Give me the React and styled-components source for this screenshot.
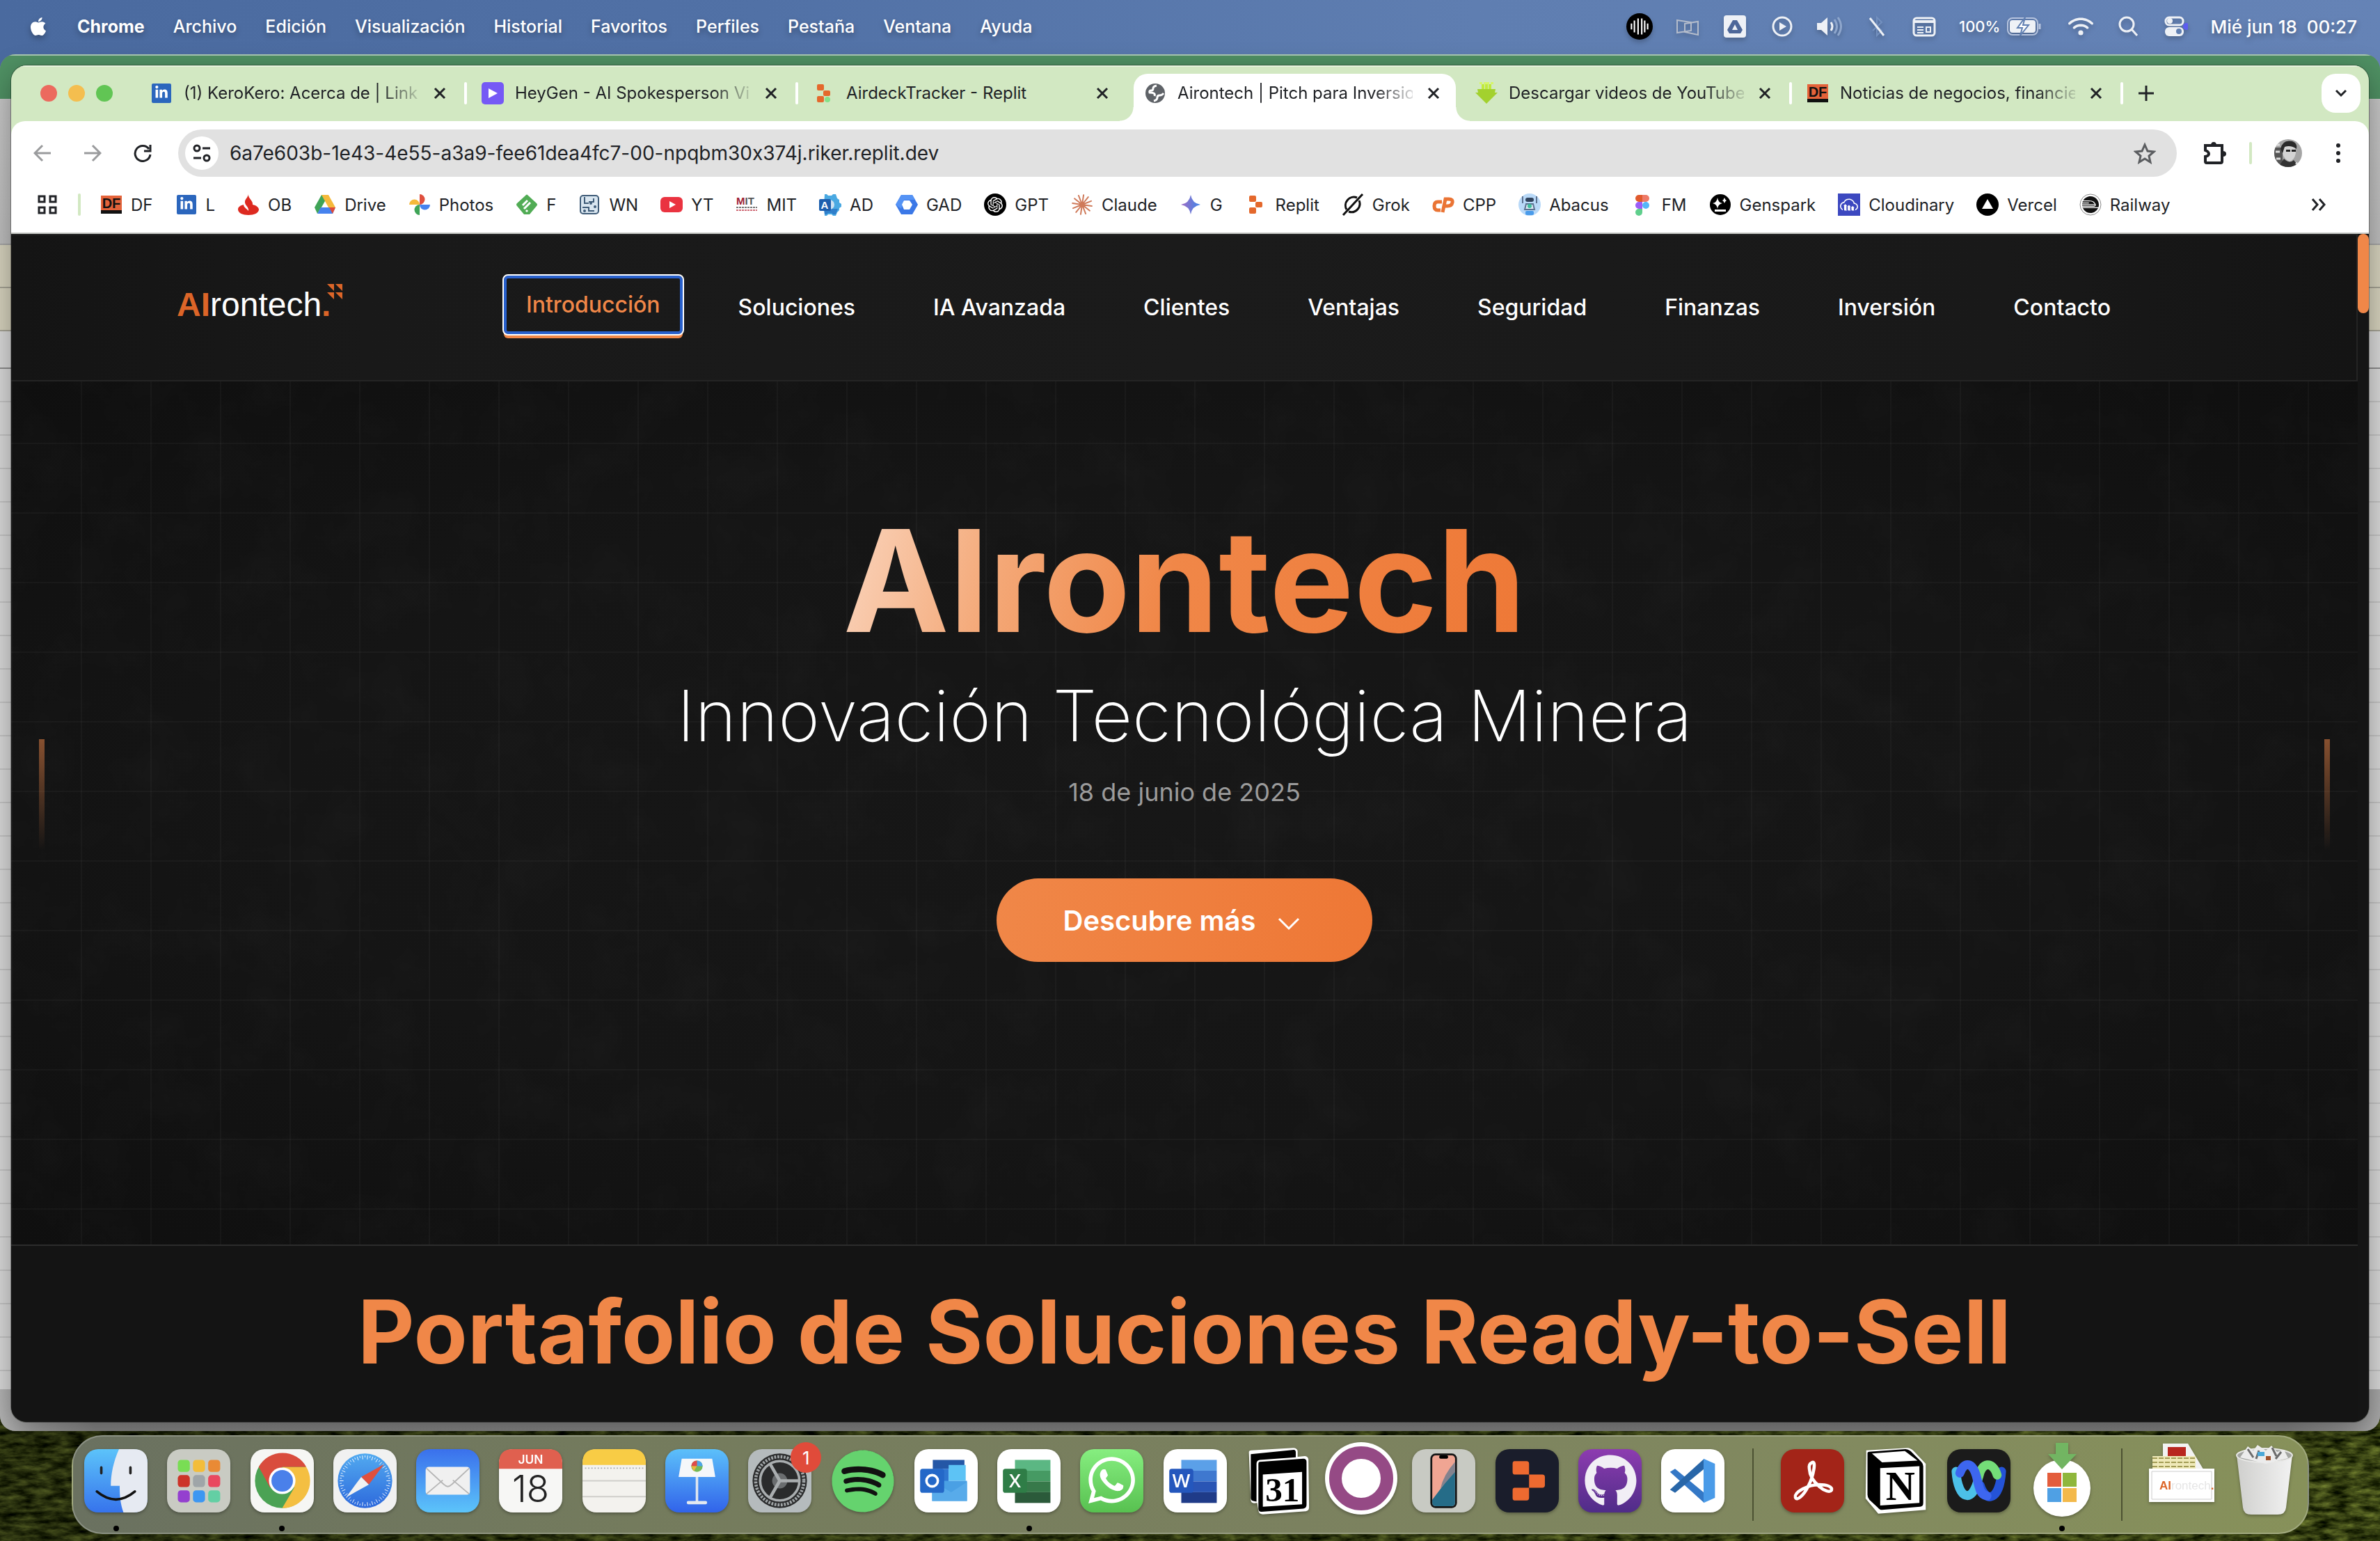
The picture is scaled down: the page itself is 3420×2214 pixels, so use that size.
import React from "react";
import styled, { createGlobalStyle, css } from "styled-components";
import { FaApple, FaSpotify, FaWhatsapp, FaGithub, FaLinkedinIn, FaWifi } from "react-icons/fa6";
import { SiOpenai, SiRailway, SiCloudinary } from "react-icons/si";

const sans = `Inter, "Liberation Sans", sans-serif`;

const GlobalStyle = createGlobalStyle`
  *, *::before, *::after { box-sizing: border-box; }
  html, body, #root { height: 100%; }
  body { margin: 0; overflow: hidden; font-family: ${sans}; background: #2b3413; }
  button, input { font: inherit; color: inherit; background: none; border: 0; padding: 0; margin: 0; }
  a { color: inherit; text-decoration: none; }
  ul, h1, h2, p { margin: 0; padding: 0; list-style: none; }
  svg { display: block; flex: none; }
`;

/* ---------- desktop ---------- */

const Desktop = styled.div`
  position: relative;
  height: 100vh;
  overflow: hidden;
  background: linear-gradient(90deg, #4a6a9f 0%, #5171a6 32%, #5f7eb1 62%, #6583b6 100%);
`;

const Wallpaper = styled.svg`
  position: absolute;
  left: 0;
  bottom: 0;
  width: 100%;
  height: 200px;
`;

const MenuBar = styled.header`
  display: flex;
  align-items: center;
  justify-content: space-between;
  height: 76px;
  padding: 0 33px 0 40px;
  color: #fff;
  font-size: 25px;
  font-weight: 500;
  text-shadow: 0 4px 8px rgba(0, 0, 0, 0.3);
  position: relative;
`;

const MenuList = styled.nav`
  display: flex;
  align-items: center;
  gap: 41px;
  & > svg { filter: drop-shadow(0 4px 4px rgba(0, 0, 0, 0.3)); }
`;

const MenuItem = styled.button`
  font-weight: ${(p) => (p.$bold ? 700 : 500)};
  text-shadow: inherit;
`;

const StatusList = styled.div`
  display: flex;
  align-items: center;
  gap: 32px;
  & > svg, & > div > svg { filter: drop-shadow(0 4px 3px rgba(0, 0, 0, 0.2)); }
`;

const Battery = styled.div`
  display: flex;
  align-items: center;
  gap: 10px;
  margin-right: 6px;
  font-size: 22px;
`;

const Clock = styled.time`
  white-space: pre;
  font-size: 26px;
`;

/* ---------- spreadsheet window behind ---------- */

const BackWindow = styled.section`
  position: absolute;
  inset: 78px 0 158px 0;
  display: flex;
  flex-direction: column;
  overflow: hidden;
  border-radius: 22px;
  background: #8b8b8b;
`;

const SheetTitle = styled.div`
  height: 64px;
  flex: none;
  border-top: 2px solid #a9c8b2;
  background: #4f9063;
`;

const SheetBand = styled.div`
  flex: none;
  height: ${(p) => p.$h}px;
  background: ${(p) => p.$bg};
  border-bottom: 2px solid ${(p) => p.$line};
`;

const SheetCells = styled.div`
  flex: 1;
  background: repeating-linear-gradient(#d9d9d9 0 46px, #c4c4c4 46px 48px);
`;

const SheetStatus = styled.div`
  flex: none;
  height: 60px;
  background: linear-gradient(90deg, #b4b4b4 0, #8b8b8b 4%, #878787 96%, #a8a8a8 100%);
`;

/* ---------- browser window ---------- */

const BrowserWindow = styled.section`
  position: absolute;
  inset: 94px 16px 171px 16px;
  display: flex;
  flex-direction: column;
  overflow: hidden;
  border-radius: 22px;
  background: #d2e8c2;
  color: #202226;
  box-shadow: 0 0 0 1px rgba(0, 0, 0, 0.3), 0 12px 40px rgba(0, 0, 0, 0.35);
`;

const TabStrip = styled.div`
  display: flex;
  align-items: center;
  flex: none;
  height: 80px;
  padding-right: 12px;
  box-shadow: inset 0 2px 0 #e6f3dc;
`;

const Lights = styled.div`
  display: flex;
  gap: 16px;
  width: 177px;
  padding-left: 42px;
`;

const Light = styled.button`
  width: 24px;
  height: 24px;
  border-radius: 50%;
  background: ${(p) => p.$color};
`;

const Tab = styled.div`
  position: relative;
  display: flex;
  align-items: center;
  width: 476px;
  height: 80px;
  padding: 0 23px;
  gap: 16px;
  font-size: 24px;
  z-index: 0;
  & > svg { width: 32px; height: 32px; }
  ${(p) =>
    p.$divider &&
    css`
      &::after {
        content: "";
        position: absolute;
        right: -2px;
        top: 24px;
        width: 4px;
        height: 32px;
        border-radius: 2px;
        background: #fff;
      }
    `}
  ${(p) =>
    p.$active &&
    css`
      &::before {
        content: "";
        position: absolute;
        z-index: -1;
        inset: 12px 5px 0 8px;
        border-radius: 20px 20px 0 0;
        background: #fff;
      }
      &::after {
        content: "";
        position: absolute;
        inset: auto -15px 0 -12px;
        height: 20px;
        background: radial-gradient(circle at 0 0, transparent 19px, #fff 20px) left / 20px 20px no-repeat,
          radial-gradient(circle at 100% 0, transparent 19px, #fff 20px) right / 20px 20px no-repeat;
      }
    `}
`;

const TabTitle = styled.button`
  flex: 1;
  min-width: 0;
  white-space: nowrap;
  text-align: left;
  line-height: 32px;
  ${(p) => p.$fade && css`mask-image: linear-gradient(90deg, #000 calc(100% - 56px), rgba(0, 0, 0, 0.15));`}
`;

const IconButton = styled.button`
  display: grid;
  place-items: center;
  flex: none;
  width: ${(p) => p.$w || 72}px;
  height: ${(p) => p.$h || 56}px;
  border-radius: 20px;
  background: ${(p) => p.$bg || "transparent"};
  color: ${(p) => p.$color || "#202226"};
`;

const Spacer = styled.div`
  flex: 1;
`;

const Toolbar = styled.div`
  flex: none;
  border-radius: 20px 20px 0 0;
  background: #fff;
  border-bottom: 2px solid #c9cbc8;
`;

const AddressRow = styled.div`
  display: flex;
  align-items: center;
  height: 92px;
  padding: 0 8px 0 9px;
`;

const Omnibox = styled.label`
  display: flex;
  align-items: center;
  flex: 1;
  height: 68px;
  margin: 0 18px 0 15px;
  padding: 0 10px;
  border-radius: 34px;
  background: #e1e1e1;
`;

const AddressInput = styled.input`
  flex: 1;
  padding: 0 16px;
  font-size: 28px;
  font-feature-settings: "calt" 0;
  outline: none;
`;

const SiteInfo = styled.span`
  display: grid;
  place-items: center;
  width: 48px;
  height: 48px;
  border-radius: 50%;
  background: #fff;
`;

const Rule = styled.span`
  flex: none;
  width: 4px;
  height: 32px;
  margin: 0 ${(p) => p.$after || 0}px 0 ${(p) => p.$before}px;
  border-radius: 2px;
  background: #d2e8c2;
`;

const Avatar = styled.svg`
  width: 40px;
  height: 40px;
  border-radius: 50%;
`;

const Bookmarks = styled.nav`
  display: flex;
  align-items: center;
  height: 56px;
  margin-bottom: 12px;
  padding: 0 36px;
`;

const BookmarkList = styled.ul`
  display: flex;
  gap: 32px;
  margin-left: 28px;
`;

const Bookmark = styled.a`
  display: flex;
  align-items: center;
  gap: 12px;
  font-size: 24px;
  white-space: nowrap;
  & > svg { width: 32px; height: 32px; }
`;

/* ---------- web page ---------- */

const Viewport = styled.div`
  position: relative;
  display: flex;
  flex: 1;
  min-height: 0;
  background: #131313;
`;

const Page = styled.main`
  position: relative;
  display: flex;
  flex-direction: column;
  flex: 1;
`;

const Scrollbar = styled.div`
  width: 16px;
  flex: none;
  background: #151515;
`;

const Thumb = styled.div`
  height: 114px;
  border-radius: 8px;
  background: #f08748;
`;

const PageHeader = styled.header`
  display: flex;
  align-items: center;
  flex: none;
  height: 212px;
  padding: 0 238px;
  border: 2px solid #242424;
  border-left: 0;
  background: linear-gradient(90deg, #141414 0, #191919 15%, #1b1b1b 50%, #191919 85%, #141414 100%);
`;

const Logo = styled.a`
  position: relative;
  width: 238px;
  margin: 0 232px 8px 0;
  font-family: "Liberation Sans", sans-serif;
  font-size: 48px;
  line-height: 56px;
  color: #fff;
  & > svg { position: absolute; right: 0; top: -2px; }
`;

const LogoAccent = styled.b`
  color: #dc6528;
`;

const SiteNav = styled.nav`
  display: flex;
  align-items: center;
  gap: 48px;
`;

const NavLink = styled.a`
  padding: 24px 32px;
  font-size: 32px;
  font-weight: 500;
  line-height: 36px;
  color: #fff;
  white-space: nowrap;
  ${(p) =>
    p.$active &&
    css`
      margin-bottom: 8px;
      color: #f08748;
      border-radius: 6px;
      outline: 2px solid #fff;
      box-shadow: inset 0 0 0 4px #2860cc, 0 6px 0 0 #f08748;
    `}
`;

const Hero = styled.section`
  position: relative;
  display: flex;
  flex-direction: column;
  align-items: center;
  flex: 1;
  padding-top: 166px;
  background:
    repeating-linear-gradient(90deg, rgba(255, 255, 255, 0.03) 0 2px, transparent 2px 100px),
    repeating-linear-gradient(180deg, transparent 0 88px, rgba(255, 255, 255, 0.03) 88px 90px, transparent 90px 100px),
    radial-gradient(ellipse at 50% 50%, #171717 0, #151515 55%, #0f0f0f 100%);
`;

const Grain = styled.svg`
  position: absolute;
  inset: 0;
  width: 100%;
  height: 100%;
  opacity: 0.08;
`;

const SideBar = styled.i`
  position: absolute;
  top: 514px;
  ${(p) => p.$side}: 40px;
  width: 8px;
  height: 160px;
  background: linear-gradient(rgba(240, 135, 72, 0.52), rgba(240, 135, 72, 0));
`;

const HeroTitle = styled.h1`
  position: relative;
  font-size: 204px;
  line-height: 240px;
  font-weight: 700;
  color: transparent;
  background: linear-gradient(105deg, #fad6bf 0%, #f4a877 24%, #f08748 48%, #ee7836 100%);
  background-clip: text;
`;

const HeroSubtitle = styled.p`
  position: relative;
  margin-top: 16px;
  font-size: 102px;
  line-height: 116px;
  font-weight: 200;
  color: #fff;
`;

const HeroDate = styled.p`
  position: relative;
  margin-top: 30px;
  font-size: 36px;
  line-height: 44px;
  color: #9b9b9b;
`;

const Cta = styled.button`
  position: relative;
  display: flex;
  align-items: center;
  gap: 30px;
  height: 120px;
  margin-top: 102px;
  padding: 0 102px 0 96px;
  border-radius: 60px;
  font-size: 40px;
  font-weight: 600;
  color: #fff;
  background: linear-gradient(100deg, #f08748, #ee7735);
`;

const Portfolio = styled.section`
  flex: none;
  padding: 51px 0 58px;
  border-top: 2px solid #2c2c2c;
  background: #141414;
  text-align: center;
`;

const PortfolioTitle = styled.h2`
  font-size: 126px;
  line-height: 144px;
  font-weight: 700;
  color: #f08748;
`;

/* ---------- dock ---------- */

const Dock = styled.footer`
  position: absolute;
  left: 103px;
  right: 102px;
  bottom: 10px;
  display: flex;
  height: 142px;
  padding: 0 2px;
  border-radius: 44px;
  border: 2px solid rgba(255, 255, 255, 0.22);
  background: linear-gradient(90deg, #6a7160 0%, #747b5d 25%, #7b815f 55%, #828a5f 80%, #87915a 100%);
`;

const DockItem = styled.button`
  position: relative;
  display: flex;
  justify-content: center;
  flex: 1;
  padding-top: ${(p) => p.$top || 18}px;
  & > svg { overflow: visible; filter: drop-shadow(0 2px 2px rgba(0, 0, 0, 0.3)); }
  &::after {
    content: "";
    display: ${(p) => (p.$running ? "block" : "none")};
    position: absolute;
    bottom: 2px;
    left: calc(50% - 4px);
    width: 8px;
    height: 8px;
    border-radius: 50%;
    background: #000;
  }
`;

const DockRule = styled.span`
  flex: none;
  width: 53px;
  margin: 17px 0;
  background: linear-gradient(#4c5232, #4c5232) center / 2px 100% no-repeat;
`;

const Badge = styled.span`
  position: absolute;
  right: 0;
  top: 8px;
  display: grid;
  place-items: center;
  width: 44px;
  height: 44px;
  border-radius: 50%;
  background: #e04b3a;
  color: #fff;
  font-size: 26px;
`;

/* ---------- drawings ---------- */

const Svg = ({ s = 32, box = 32, children, ...rest }) => (
  <svg width={s} height={s} viewBox={`0 0 ${box} ${box}`} fill="none" {...rest}>
    {children}
  </svg>
);

const Grad = ({ id, a, b, h }) => (
  <linearGradient id={id} x1="0" y1="0" x2={h ? 1 : 0} y2={h ? 0 : 1}>
    <stop offset="0" stopColor={a} />
    <stop offset="1" stopColor={b} />
  </linearGradient>
);

const CloseIcon = () => (
  <Svg s={18} box={18} stroke="#202226" strokeWidth="3"><path d="M2 2l14 14M16 2L2 16" /></Svg>
);

const LinkedIn = () => (
  <Svg><rect x="2" y="2" width="28" height="28" rx="2" fill="#2b66bd" /><FaLinkedinIn x="6" y="5" size={20} color="#fff" /></Svg>
);
const DFIcon = () => (
  <Svg>
    <rect x="1" y="3" width="30" height="26" fill="#111" /><rect x="1" y="3" width="30" height="21" fill="#e4633a" />
    <text x="16" y="21" fontSize="20" fontWeight="600" textAnchor="middle" fill="#111" fontFamily="Liberation Sans, sans-serif">DF</text>
  </Svg>
);
const ReplitIcon = ({ dot }) => (
  <Svg fill="#e4682c">
    <rect x="6" y="3" width="10" height="9" rx="2" /><rect x="15" y="12" width="10" height="8" rx="2" />
    <rect x="6" y="20" width="10" height="9" rx="2" />{dot && <circle cx="21" cy="25" r="4" fill="#85e08a" />}
  </Svg>
);
const HeyGen = () => (
  <Svg><rect width="32" height="32" rx="5" fill="#7559f5" /><path d="M10 9l13 7-13 7z" fill="#fff" /></Svg>
);
const GlobeIcon = () => (
  <Svg><circle cx="16" cy="16" r="14" fill="#5f6368" /><path d="M18 5q-5 1-5 4 0 3-3 3t-2 3q4 0 6 1t1 4" stroke="#fff" strokeWidth="3" /><path d="M14 27q5-1 5-5 0-3 3-3 4 0 6-3" stroke="#fff" strokeWidth="3" /></Svg>
);
const DownIcon = () => (
  <Svg><path d="M6 0h4v3H6zM12 0h8v3h-8zM22 0h4v3h-4z" fill="#d6f56a" /><path d="M9 3h4v8H9zM14 3h4v8h-4zM19 3h4v8h-4z" fill="#c1ea3c" /><path d="M3 10h26l-1 5h4L16 31 0 15h4z" fill="#a3d12e" /></Svg>
);

const tabs = [
  { title: "(1) KeroKero: Acerca de | Link", icon: <LinkedIn />, divider: true, fade: true },
  { title: "HeyGen - AI Spokesperson Vi", icon: <HeyGen />, divider: true, fade: true },
  { title: "AirdeckTracker - Replit", icon: <ReplitIcon dot /> },
  { title: "Airontech | Pitch para Inversio", icon: <GlobeIcon />, active: true, fade: true },
  { title: "Descargar videos de YouTube", icon: <DownIcon />, divider: true, fade: true },
  { title: "Noticias de negocios, financie", icon: <DFIcon />, divider: true, fade: true },
];

const rays = Array.from({ length: 12 }, (_, i) => {
  const a = (i * Math.PI) / 6 + 0.15;
  return `M16 16L${16 + 14 * Math.cos(a)} ${16 + 14 * Math.sin(a)}`;
}).join("");

const bookmarks = [
  ["DF", <DFIcon />],
  ["L", <LinkedIn />],
  ["OB", <Svg><path d="M16 1c-1 6 7 9 6 15 5 1 9 4 9 7 0 5-7 8-15 8S1 28 1 23c0-4 4-6 8-7 0 4 5 6 7 9 1-6-6-8-5-14 1-4 4-5 5-10z" fill="#dd2a20" /></Svg>],
  ["Drive", <Svg><path d="M11 2h10l-9 16-7 11-4-9z" fill="#3fa457" /><path d="M11 2h10l10 18H21z" fill="#f5b93b" /><path d="M10 20h21l-4 9H5z" fill="#4682ee" /><path d="M22 20h9l-4 9z" fill="#e04a38" /></Svg>],
  ["Photos", <Svg><path d="M16 1a7.500 7.500 0 0 1 0 15z" fill="#df4f3e" /><path d="M31 16a7.500 7.500 0 0 1-15 0z" fill="#4682ee" /><path d="M16 31a7.500 7.500 0 0 1 0-15z" fill="#3fa457" /><path d="M1 16a7.500 7.500 0 0 1 15 0z" fill="#f5b93b" /></Svg>],
  ["F", <Svg><path d="M14 3q2-3 4 0l12 11q2 2 0 4L20 30h-8L2 18q-2-2 0-4z" fill="#51ac55" /><path d="M10 17l7-7M12 22l9-9M15 26l2-2" stroke="#fff" strokeWidth="3" /></Svg>],
  ["WN", <Svg><rect x="3" y="3" width="26" height="26" rx="4" fill="#d9e6f0" stroke="#3f5c78" strokeWidth="2" /><path d="M9 5v9h6M22 7v5h-7M6 20h9v5h8" stroke="#3f5c78" strokeWidth="2" /><circle cx="18" cy="14" r="2" fill="#3f5c78" /><circle cx="24" cy="19" r="2" fill="#3f5c78" /><circle cx="9" cy="25" r="2" fill="#3f5c78" /></Svg>],
  ["YT", <Svg><rect x="0" y="5" width="32" height="22" rx="6" fill="#ea3340" /><path d="M13 11l9 5-9 5z" fill="#fff" /></Svg>],
  ["MIT", <Svg fontFamily="Liberation Sans, sans-serif" fontWeight="700"><text x="1" y="16" fontSize="15" fill="#9d2235">M<tspan fill="#555">IT</tspan></text><path d="M1 20h30" stroke="#777" strokeWidth="2" strokeDasharray="3 1" /><path d="M1 24h30" stroke="#cf6b77" strokeWidth="2" strokeDasharray="3 1" /></Svg>],
  ["AD", <Svg><path d="M8 1h3l2 2h5l2-2h4l2 6 3 2v4l3 2v4l-3 2v3l-3 3-2 5h-4l-2-2h-5l-2 2H8L7 16z" fill="#4aa9e2" /><path d="M7 22h20l-3 8h-4l-2-2h-5l-2 2H8z" fill="#2f7fcb" /><path d="M15 9a7 7 0 0 1 0 14z" fill="#cfe2f2" /><rect x="0" y="8" width="17" height="17" rx="2" fill="#1d5fae" /><text x="8" y="22" fontSize="15" fontWeight="700" textAnchor="middle" fill="#fff" fontFamily="Liberation Sans, sans-serif">A</text></Svg>],
  ["GAD", <Svg><path d="M8 2h16l8 14-8 14H8L0 16z" fill="#3b78e7" /><path d="M8 2h16l4 7H12L8 22 0 16z" fill="#5593f5" /><path d="M12 10h8l4 6-4 7h-8l-3-7z" fill="#fff" /></Svg>],
  ["GPT", <Svg><circle cx="16" cy="16" r="16" fill="#000" /><SiOpenai x="5" y="5" size={22} color="#fff" /></Svg>],
  ["Claude", <Svg><path d={rays} stroke="#cf7a5a" strokeWidth="2" strokeLinecap="round" /></Svg>],
  ["G", <Svg><defs><Grad id="gem" a="#a06cc4" b="#3f86e8" h /></defs><path d="M16 2q2 12 14 14-12 2-14 14Q14 18 2 16 14 14 16 2z" fill="url(#gem)" /></Svg>],
  ["Replit", <ReplitIcon />],
  ["Grok", <Svg stroke="#111" strokeWidth="3"><path d="M22 6a12 12 0 0 0-15 17M10 26a12 12 0 0 0 15-16M2 31L30 1" /></Svg>],
  ["CPP", <Svg stroke="#ea7434" strokeWidth="5"><path d="M14 12H8q-5 0-5 6t5 6h4M15 27l4-19h5q6 0 5 5t-7 5h-4" /></Svg>],
  ["Abacus", <Svg><circle cx="16" cy="16" r="16" fill="#b9d9f8" /><rect x="10" y="6" width="12" height="6" rx="3" fill="#31435c" /><path d="M6 4v10M26 4v10M11 15h10l2 8H9z" stroke="#5b7190" strokeWidth="2" fill="#dce9f5" /><circle cx="16" cy="18" r="3" fill="#3bbf9a" /><rect x="10" y="25" width="12" height="6" rx="2" fill="#4a9bea" /></Svg>],
  ["FM", <Svg><path d="M16 2H11a5 5 0 0 0 0 10h5z" fill="#e05a2d" /><path d="M16 2h5a5 5 0 0 1 0 10h-5z" fill="#ee7a68" /><path d="M16 12h-5a5 5 0 0 0 0 10h5z" fill="#9b5cf6" /><circle cx="21" cy="17" r="5" fill="#55b7f8" /><path d="M16 22h-5a5 5 0 1 0 5 5z" fill="#5fcf8c" /></Svg>],
  ["Genspark", <Svg><circle cx="16" cy="16" r="15" fill="#000" /><path d="M12 6q1 7 7 8-6 1-7 8-1-7-7-8 6-1 7-8zM22 6q1 3 3 4-2 1-3 4-1-3-3-4 2-1 3-4zM8 23h16v3H8z" fill="#fff" /></Svg>],
  ["Cloudinary", <Svg><rect width="32" height="32" fill="#3c48c0" /><SiCloudinary x="3" y="3" size={26} color="#fff" /></Svg>],
  ["Vercel", <Svg><circle cx="16" cy="16" r="16" fill="#000" /><path d="M16 8l8 14H8z" fill="#fff" /></Svg>],
  ["Railway", <Svg><circle cx="16" cy="16" r="15" fill="#fff" stroke="#888" /><SiRailway x="4" y="4" size={24} color="#111" /></Svg>],
];

const menus = ["Archivo", "Edición", "Visualización", "Historial", "Favoritos", "Perfiles", "Pestaña", "Ventana", "Ayuda"];
const links = ["Introducción", "Soluciones", "IA Avanzada", "Clientes", "Ventajas", "Seguridad", "Finanzas", "Inversión", "Contacto"];

const Tile = ({ fill, children }) => (
  <Svg s={91} box={100}><rect width="100" height="100" rx="22" fill={fill} />{children}</Svg>
);

const OfficeTile = ({ letter, colors, dark }) => (
  <Tile fill="#fff">
    {colors.map((c, i) => <rect key={c} x="28" y={17 + i * 17} width="56" height="17" fill={c} />)}
    <rect x="9" y="31" width="38" height="38" rx="4" fill={dark} />
    <text x="28" y="60" fontSize="30" fontWeight="600" textAnchor="middle" fill="#fff" fontFamily="Open Sans, sans-serif">{letter}</text>
  </Tile>
);

const padColors = ["#79dd54", "#f3bd3a", "#e98a35", "#cc3328", "#9fa5a8", "#e9485f", "#9440cf", "#3d97f2", "#63cfa4"];
const ticks = Array.from({ length: 60 }, (_, i) => {
  const a = (i * Math.PI) / 30;
  const c = Math.cos(a), s = Math.sin(a), r = i % 2 ? 37 : 34;
  return `M${50 + r * c} ${50 + r * s}L${50 + 40 * c} ${50 + 40 * s}`;
}).join("");

const dockMain = [
  ["Finder", <Tile fill="url(#finder)"><path d="M55 0c-9 20-13 40-13 58h14c0 16 1 28 6 42h16q22 0 22-22V22Q100 0 78 0z" fill="#e6eaf2" /><path d="M27 29v9M73 29v9" stroke="#222" strokeWidth="4" strokeLinecap="round" /><path d="M20 67q30 25 60 0" stroke="#111" strokeWidth="4" strokeLinecap="round" /></Tile>, { $running: true }],
  ["Launchpad", <Tile fill="#c9cbc3">{padColors.map((c, i) => <rect key={c} x={17 + (i % 3) * 24} y={17 + Math.floor(i / 3) * 24} width="19" height="19" rx="5" fill={c} />)}</Tile>],
  ["Chrome", <Tile fill="#f6f6f4"><circle cx="50" cy="50" r="43" fill="#4ba254" /><path d="M50 28h38A43 43 0 0 1 50 93l19-32z" fill="#f4bf42" /><path d="M13 28A43 43 0 0 1 88 28H50L31 61z" fill="#d94c3d" /><circle cx="50" cy="50" r="21" fill="#fff" /><circle cx="50" cy="50" r="17" fill="#4a80ea" /></Tile>, { $running: true }],
  ["Safari", <Tile fill="#f1f1f1"><circle cx="50" cy="50" r="43" fill="url(#safari)" /><path d={ticks} stroke="#fff" strokeWidth="1" /><path d="M80 24L56 56 44 44z" fill="#e0503e" /><path d="M20 76l24-32 12 12z" fill="#f2f2f2" /></Tile>],
  ["Mail", <Tile fill="url(#mail)"><rect x="15" y="28" width="70" height="44" rx="5" fill="#f0f0f0" /><path d="M16 71l26-22M84 71L58 49M16 30l28 26q6 6 12 0l28-26" stroke="#b5b5b5" strokeWidth="2" /></Tile>],
  ["Calendario", <Tile fill="#f7f7f5"><path d="M0 31V22Q0 0 22 0h56q22 0 22 22v9z" fill="#e0604f" /><text x="50" y="23" fontSize="19" fontWeight="600" textAnchor="middle" fill="#fff" fontFamily="Inter, sans-serif">JUN</text><text x="50" y="84" fontSize="58" textAnchor="middle" fill="#222" fontWeight="300" fontFamily="Inter, sans-serif">18</text></Tile>],
  ["Notas", <Tile fill="#f3f2ee"><path d="M0 25V22Q0 0 22 0h56q22 0 22 22v3z" fill="#f8cc45" /><path d="M0 50h100M0 75h100" stroke="#d0cfcb" strokeWidth="2" /><path d="M4 30h92" stroke="#aaa" strokeWidth="2" strokeDasharray="2 3" /></Tile>],
  ["Keynote", <Tile fill="url(#keynote)"><path d="M26 15h48l5 29H21z" fill="#f5f7fa" /><circle cx="50" cy="27" r="9" fill="#75b956" /><path d="M50 27v-9a9 9 0 0 1 9 9z" fill="#4ea5ea" /><path d="M50 27v-9a9 9 0 0 0-9 9z" fill="#df4a4a" /><path d="M41 27h9l-5 8z" fill="#edb43c" /><path d="M50 44v42" stroke="#dfe6f0" strokeWidth="4" /><rect x="34" y="82" width="32" height="5" rx="2" fill="#e4e9f0" /></Tile>],
  ["Ajustes", <Tile fill="#b5bbbd"><circle cx="50" cy="50" r="43" fill="#2a2b2c" /><circle cx="50" cy="50" r="38" stroke="#9fa4a6" strokeWidth="5" strokeDasharray="3 2" /><circle cx="50" cy="50" r="31" stroke="#a9adaf" strokeWidth="4" /><circle cx="50" cy="50" r="12" fill="#6a6d6f" /><path d="M50 50h32M50 50L34 22M50 50L34 78" stroke="#a9adaf" strokeWidth="5" /></Tile>, { badge: "1" }],
  ["Spotify", <Svg s={92} box={100}><circle cx="50" cy="50" r="48" fill="#111" /><FaSpotify size={100} color="#65d36e" /></Svg>],
  ["Outlook", <Tile fill="#fff"><path d="M29 17h50v14H29z" fill="#2457a6" /><path d="M29 31h25v35H29z" fill="#2f76d0" /><path d="M54 25h27v25H54z" fill="#5dc3f5" /><path d="M28 50h55v32H28z" fill="#4aa0e4" /><path d="M28 50l30 18 25-16v30H28z" fill="#58abea" /><rect x="9" y="31" width="38" height="38" rx="4" fill="#2468c8" /><circle cx="28" cy="50" r="9" stroke="#fff" strokeWidth="4" /></Tile>],
  ["Excel", <OfficeTile letter="X" dark="#2f7d47" colors={["#5bb783", "#469a63", "#37794a", "#2b5a3a"]} />, { $running: true }],
  ["WhatsApp", <Tile fill="url(#wa)"><FaWhatsapp x="8" y="7" size={84} color="#fff" /></Tile>],
  ["Word", <OfficeTile letter="W" dark="#2457bd" colors={["#5ba0e8", "#3f78cf", "#2a55b5", "#1f3b88"]} />],
  ["Notion Calendar", <Svg s={91} box={100}><path d="M4 5q0-3 4-3L74-2q6 0 7 5v9l11-1q5 0 6 5l1 76q0 5-5 6l-68 5q-6 0-7-6l-2-12q-9 2-10-4z" fill="#fff" /><path d="M7 8l68-7q3 0 3 4v8L21 17q-5 1-5 6v60l-5-1q-4-1-4-5z" fill="#000" /><path d="M21 20l69-5q5 0 5 5v68q0 5-5 6l-66 5q-5 0-5-5V24q0-4 2-4z" fill="#000" /><path d="M26 40l62-4v51l-62 4z" fill="#fff" /><text x="57" y="82" fontSize="54" fontWeight="700" textAnchor="middle" fill="#000" fontFamily="Liberation Serif, serif">31</text></Svg>],
  ["Grabadora", <Svg s={104} box={104}><circle cx="52" cy="52" r="52" fill="#fff" /><circle cx="52" cy="52" r="37" stroke="#954a85" strokeWidth="18" /></Svg>, { $top: 8 }],
  ["Duplicación del iPhone", <Tile fill="#c8cac3"><rect x="29" y="7" width="42" height="86" rx="8" fill="#151515" /><rect x="32" y="10" width="36" height="80" rx="5" fill="#f0a593" /><path d="M68 32Q40 70 32 80v5q0 5 5 5h26q5 0 5-5z" fill="#256c88" /><path d="M68 20Q50 40 45 62l23-26z" fill="#83828e" /><rect x="43" y="10" width="14" height="5" rx="2" fill="#000" /></Tile>],
  ["Replit", <Tile fill="#1a1d2b"><path d="M30 19h19q4 0 4 4v17H30q-3 0-3-4V23q0-4 3-4zM53 40h21q4 0 4 4v13q0 4-4 4H53zM30 61h23v16q0 4-4 4H30q-3 0-3-4V65q0-4 3-4z" fill="#ee6a30" /></Tile>],
  ["GitHub", <Tile fill="url(#gh)"><FaGithub x="9" y="8" size={84} color="#f1eef5" /></Tile>],
  ["Visual Studio Code", <Tile fill="#fff"><path d="M14 36l8-5 46 38v16z" fill="#3478c6" /><path d="M14 64l8 5 46-38V15z" fill="#2866a8" /><path d="M67 15l18 8v54l-18 8z" fill="#4a9be8" /></Tile>],
];

const dockRecent = [
  ["Acrobat", <Tile fill="#a32418"><path d="M48 22c9-8 4 20-5 37-7 14-18 24-20 17-2-8 20-20 37-20 12 0 22 3 20 9-5 8-34-12-35-34q-1-7 3-9z" stroke="#fff" strokeWidth="5" /></Tile>],
  ["Notion", <Svg s={91} box={100}><path d="M3 2L68-2q5 0 10 5l19 20v73L22 102 2 78z" fill="#fff" /><path d="M5 6q0-2 3-2l57-4q4 0 8 3l17 17q3 3 3 7v58q0 6-5 6l-60 5q-4 0-7-4L8 80q-3-4-3-8z" fill="#000" /><path d="M12 7l52-4 20 15-56 3z" fill="#fff" /><path d="M25 30l62-3v58l-62 4z" fill="#fff" /><text x="57" y="80" fontSize="64" fontWeight="700" textAnchor="middle" fill="#000" fontFamily="Liberation Serif, serif">N</text></Svg>],
  ["Webex", <Tile fill="#1b1b1b"><path d="M86 35c-3 45-24 52-34 22" stroke="#2453d8" strokeWidth="14" strokeLinecap="round" /><path d="M14 35c3 45 26 52 35 12" stroke="#4cc0e8" strokeWidth="14" strokeLinecap="round" /><path d="M50 44c4-24 22-26 29-3" stroke="#74dd78" strokeWidth="14" strokeLinecap="round" /><path d="M20 38c7-20 21-18 27 8 4 18 6 26 16 28" stroke="#3d66f0" strokeWidth="14" strokeLinecap="round" /></Tile>],
  ["Microsoft AutoUpdate", <Svg s={106} box={106}><circle cx="53" cy="65" r="41" fill="#fff" /><path d="M44 0h18v16h12L53 38 33 16h11z" fill="#72b562" /><path d="M32 43h20v20H32z" fill="#e35d3c" /><path d="M54 43h20v20H54z" fill="#8fb73c" /><path d="M32 65h20v20H32z" fill="#4fa0e4" /><path d="M54 65h20v20H54z" fill="#f3b94b" /></Svg>, { $running: true, $top: 9 }],
];

const dockRight = [
  ["Descargas", <Svg s={94} box={94}><path d="M20 0h36l24 40H20z" fill="#f2f2f2" /><path d="M27 5h26v14H27z" fill="#b8261f" /><path d="M5 18h62v20H5z" fill="#efe9b8" /><path d="M5 21h62M5 27h62M5 33h62" stroke="#a29c55" strokeWidth="2" strokeDasharray="7 2" /><path d="M0 36h94v48H0z" fill="#fff" /><path d="M4 40h86v40H4z" stroke="#ccc" /><text x="15" y="66" fontSize="17" fontFamily="Liberation Sans, sans-serif" fill="#dc6528" fontWeight="700">AI<tspan fill="#e6e6e6" fontWeight="400">rontech</tspan>.</text></Svg>, { $top: 10 }],
  ["Papelera", <Svg s={104} box={104}><defs><Grad id="bin" a="#cfcfcd" b="#f2f2f2" h /></defs><path d="M12 16h80l-9 76q-1 10-12 10H33q-11 0-12-10z" fill="url(#bin)" /><ellipse cx="52" cy="17" rx="40" ry="10" fill="#a4a6a2" stroke="#e8e8e6" strokeWidth="2" /><path d="M17 20L28 4l8 6 6-8 12 8 8-7 8 9 10-3 6 12-32 8z" fill="#ececec" /><path d="M28 8l8 12M44 10l-4 12M63 6l6 12M76 12l-8 10" stroke="#6c6c6c" strokeWidth="3" /><path d="M42 12h10v6H42z" fill="#4aa8d8" /><path d="M54 18h7v6h-7z" fill="#a0522d" /></Svg>, { $top: 10 }],
];

const DockGroup = ({ items }) =>
  items.map(([label, icon, opts = {}]) => {
    const { badge, ...rest } = opts;
    return (
      <DockItem key={label} aria-label={label} {...rest}>
        {icon}
        {badge && <Badge>{badge}</Badge>}
      </DockItem>
    );
  });

const StatusIcons = () => (
  <>
    <Svg s={38} box={36}><circle cx="18" cy="18" r="18" fill="#000" /><path d="M7 14v8M11 10v16M16 7v22M21 7v22M25 10v16M29 14v8" stroke="#fff" strokeWidth="2" /></Svg>
    <Svg s={36} box={36} stroke="#b4bccb" strokeWidth="2"><path d="M3 9l20 3v12l-20 3zM14 14l19-3v19l-19-4z" /></Svg>
    <Svg s={36} box={36}><rect x="2" y="2" width="32" height="32" rx="4" fill="#eef1f6" /><path d="M15 9h6l8 14-3 5H10l-3-5z" fill="#4d6799" /><path d="M18 15l4 8h-8z" fill="#eef1f6" /></Svg>
    <Svg s={36} box={36} stroke="#eef1f6" strokeWidth="3"><circle cx="18" cy="18" r="13" /><path d="M14 12l10 6-10 6z" fill="#eef1f6" stroke="none" /></Svg>
    <Svg s={36} box={36} strokeWidth="3"><path d="M0 13h6l9-8v26l-9-8H0z" fill="#eef1f6" /><path d="M20 12q4 6 0 12" stroke="#eef1f6" /><path d="M25 8q7 10 0 20M30 5q9 13 0 26" stroke="#8ea6cc" /></Svg>
    <Svg s={36} box={36} strokeWidth="3"><path d="M12 12l13 12-7 7V5l7 7-13 12" stroke="#7390bf" strokeWidth="2" /><path d="M8 6l20 25" stroke="#eef1f6" /></Svg>
    <Svg s={36} box={36}><rect x="3" y="6" width="30" height="25" rx="4" stroke="#eef1f6" strokeWidth="3" /><path d="M3 11h30" stroke="#eef1f6" strokeWidth="4" /><path d="M8 19h9M8 23h9M8 27h9M21 19h6v7h-6z" stroke="#eef1f6" strokeWidth="2" /></Svg>
  </>
);

export default function App() {
  return (
    <>
      <GlobalStyle />
      <Desktop>
        <Wallpaper>
          <defs>
            <filter id="grass" x="0" y="0" width="100%" height="100%" colorInterpolationFilters="sRGB">
              <feTurbulence type="fractalNoise" baseFrequency="0.04 0.12" numOctaves="4" seed="8" />
              <feColorMatrix values="0.6 0 0 0 -0.09  0.64 0 0 0 -0.07  0.3 0 0 0 -0.08  0 0 0 0 1" />
            </filter>
            <linearGradient id="shade"><stop offset="0" stopOpacity="0.3" /><stop offset="1" stopOpacity="0" /></linearGradient>
            <Grad id="finder" a="#5cc3fa" b="#3673ec" />
            <Grad id="safari" a="#52aaf0" b="#2d69dc" />
            <Grad id="mail" a="#3a70ec" b="#5cc4fa" />
            <Grad id="keynote" a="#5cc0fa" b="#3163ea" />
            <Grad id="wa" a="#86ee80" b="#58c150" />
            <Grad id="gh" a="#8d3cb0" b="#4f2c88" />
          </defs>
          <rect width="100%" height="100%" filter="url(#grass)" />
          <rect width="100%" height="100%" fill="url(#shade)" />
        </Wallpaper>

        <MenuBar>
          <MenuList aria-label="Menú">
            <FaApple size={30} />
            <MenuItem $bold>Chrome</MenuItem>
            {menus.map((m) => <MenuItem key={m}>{m}</MenuItem>)}
          </MenuList>
          <StatusList>
            <StatusIcons />
            <Battery>
              100%
              <svg width="50" height="26" viewBox="0 0 50 26" fill="none">
                <rect x="1" y="1" width="43" height="24" rx="7" stroke="#b5c3de" strokeWidth="2" />
                <rect x="4" y="4" width="37" height="18" rx="4" fill="#eef1f6" />
                <path d="M47 9v8" stroke="#b5c3de" strokeWidth="3" />
                <path d="M26 0L15 15h7l-3 11 12-15h-8z" fill="#fff" stroke="#5f7eb1" strokeWidth="2" />
              </svg>
            </Battery>
            <FaWifi size={36} color="#eef1f6" />
            <Svg s={36} box={36} stroke="#eef1f6" strokeWidth="3"><circle cx="16" cy="15" r="10" /><path d="M23 22l8 9" /></Svg>
            <Svg s={36} box={36}><rect x="4" y="5" width="25" height="11" rx="5" stroke="#eef1f6" strokeWidth="3" /><circle cx="10" cy="10" r="4" fill="#eef1f6" /><rect x="3" y="19" width="27" height="13" rx="6" fill="#eef1f6" /><circle cx="23" cy="25" r="4" fill="#5f7eb1" /><circle cx="34" cy="18" r="5" fill="#5d5df0" /></Svg>
            <Clock>{"Mié jun 18  00:27"}</Clock>
          </StatusList>
        </MenuBar>

        <BackWindow aria-hidden="true">
          <SheetTitle />
          <SheetBand $h={210} $bg="linear-gradient(#c6c6c6, #bdbdbd)" $line="#a5a5a5" />
          <SheetBand $h={62} $bg="#d6d2bd" $line="#a5a294" />
          <SheetBand $h={62} $bg="#d6d2bd" $line="#a5a294" />
          <SheetBand $h={54} $bg="#d9d9d9" $line="#8b8b8b" />
          <SheetCells />
          <SheetStatus />
        </BackWindow>

        <BrowserWindow>
          <TabStrip>
            <Lights>
              <Light aria-label="Cerrar" $color="#ec6a5e" />
              <Light aria-label="Minimizar" $color="#f4be4f" />
              <Light aria-label="Ampliar" $color="#61c554" />
            </Lights>
            {tabs.map((t) => (
              <Tab key={t.title} $active={t.active} $divider={t.divider}>
                {t.icon}
                <TabTitle $fade={t.fade}>{t.title}</TabTitle>
                <IconButton $w={28} $h={32} aria-label="Cerrar pestaña"><CloseIcon /></IconButton>
              </Tab>
            ))}
            <IconButton $w={70} aria-label="Nueva pestaña">
              <Svg s={22} box={22} stroke="#202226" strokeWidth="3"><path d="M11 0v22M0 11h22" /></Svg>
            </IconButton>
            <Spacer />
            <IconButton $w={56} $bg="#fff" aria-label="Buscar pestañas">
              <Svg s={18} box={18} stroke="#202226" strokeWidth="3"><path d="M2 5l7 7 7-7" /></Svg>
            </IconButton>
          </TabStrip>

          <Toolbar>
            <AddressRow>
              <IconButton aria-label="Atrás" $color="#9a9b9d">
                <Svg s={26} box={26} stroke="currentColor" strokeWidth="3"><path d="M25 13H2M13 2L2 13l11 11" /></Svg>
              </IconButton>
              <IconButton aria-label="Adelante" $color="#9a9b9d">
                <Svg s={26} box={26} stroke="currentColor" strokeWidth="3"><path d="M1 13h23M13 2l11 11-11 11" /></Svg>
              </IconButton>
              <IconButton aria-label="Recargar">
                <Svg s={26} box={26} stroke="currentColor" strokeWidth="3"><path d="M22 7a11 11 0 1 0 2 8" /><path d="M24 1v9h-9" /></Svg>
              </IconButton>
              <Omnibox>
                <SiteInfo>
                  <Svg s={28} box={28} stroke="#202226" strokeWidth="3"><circle cx="7" cy="7" r="4" /><path d="M15 7h11M2 21h11" /><circle cx="21" cy="21" r="4" /></Svg>
                </SiteInfo>
                <AddressInput aria-label="Dirección" defaultValue="6a7e603b-1e43-4e55-a3a9-fee61dea4fc7-00-npqbm30x374j.riker.replit.dev" />
                <IconButton aria-label="Añadir a marcadores" $color="#5b5d60">
                  <Svg s={32} box={32} stroke="currentColor" strokeWidth="3"><path d="M16 4l4 9 9 1-7 6 2 9-8-5-8 5 2-9-7-6 9-1z" /></Svg>
                </IconButton>
              </Omnibox>
              <IconButton aria-label="Extensiones">
                <Svg s={36} box={36} stroke="currentColor" strokeWidth="4"><path d="M5 7h24v23q0 2-2 2H7q-2 0-2-2v-7q5-1 5-4t-5-5z" /><path d="M13 7q0-5 4-5t4 5zM30 15q5 0 5 4t-5 4z" fill="currentColor" stroke="none" /></Svg>
              </IconButton>
              <Rule $before={14} $after={16} />
              <IconButton aria-label="Perfil">
                <Avatar viewBox="0 0 40 40"><rect width="40" height="40" fill="#a5a5a5" /><path d="M0 12h12v28H0z" fill="#555" /><path d="M13 10q8-6 17 0l1 10q-2 10-9 12-8-3-10-12z" fill="#d4d4d4" /><path d="M9 14Q12 0 26 3q8 3 6 11-8-6-17-3l-3 9z" fill="#2a2a2a" /><path d="M17 15h6v3h-6zM25 15h6v3h-6z" fill="#222" /><path d="M6 40l8-12q8 8 14 2l8 10z" fill="#333" /><path d="M2 8h6M2 18h6M3 28h6M31 34l6 4" stroke="#ddd" strokeWidth="3" /></Avatar>
              </IconButton>
              <IconButton aria-label="Menú de Chrome">
                <Svg s={32} box={32} fill="currentColor"><circle cx="16" cy="5" r="3" /><circle cx="16" cy="16" r="3" /><circle cx="16" cy="27" r="3" /></Svg>
              </IconButton>
            </AddressRow>
            <Bookmarks aria-label="Marcadores">
              <IconButton $w={32} aria-label="Grupos de pestañas">
                <Svg s={30} box={30} stroke="currentColor" strokeWidth="3"><path d="M3 3h8v8H3zM19 3h8v8h-8zM3 19h8v8H3zM19 19h8v8h-8z" /></Svg>
              </IconButton>
              <Rule $before={28} />
              <BookmarkList>
                {bookmarks.map(([name, icon]) => (
                  <li key={name}><Bookmark href={`#${name}`}>{icon}{name}</Bookmark></li>
                ))}
              </BookmarkList>
              <Spacer />
              <IconButton aria-label="Más marcadores">
                <Svg s={24} box={24} stroke="currentColor" strokeWidth="3"><path d="M3 4l7 8-7 8M13 4l7 8-7 8" /></Svg>
              </IconButton>
            </Bookmarks>
          </Toolbar>

          <Viewport>
            <Page>
              <PageHeader>
                <Logo href="#inicio">
                  <LogoAccent>AI</LogoAccent>rontech<LogoAccent>.</LogoAccent>
                  <svg width="22" height="22" viewBox="0 0 22 22" fill="#dc6528"><path d="M0 0h10v10zM12 0h10v10zM0 12h10v10zM12 12h10v10z" /></svg>
                </Logo>
                <SiteNav aria-label="Secciones">
                  {links.map((l, i) => <NavLink key={l} href={`#s${i}`} $active={i === 0}>{l}</NavLink>)}
                </SiteNav>
              </PageHeader>
              <Hero>
                <Grain aria-hidden="true">
                  <filter id="grain" x="0" y="0" width="100%" height="100%">
                    <feTurbulence type="fractalNoise" baseFrequency="0.012" numOctaves="6" seed="3" />
                    <feColorMatrix values="0 0 0 0 0.5  0 0 0 0 0.5  0 0 0 0 0.5  0.6 0 0 0 -0.24" />
                  </filter>
                  <rect width="100%" height="100%" filter="url(#grain)" />
                </Grain>
                <SideBar $side="left" />
                <SideBar $side="right" />
                <HeroTitle>AIrontech</HeroTitle>
                <HeroSubtitle>Innovación Tecnológica Minera</HeroSubtitle>
                <HeroDate>18 de junio de 2025</HeroDate>
                <Cta>
                  Descubre más
                  <Svg s={36} box={36} stroke="#fff" strokeWidth="3"><path d="M4 16l14 14 14-14" /></Svg>
                </Cta>
              </Hero>
              <Portfolio>
                <PortfolioTitle>Portafolio de Soluciones Ready-to-Sell</PortfolioTitle>
              </Portfolio>
            </Page>
            <Scrollbar><Thumb /></Scrollbar>
          </Viewport>
        </BrowserWindow>

        <Dock>
          <DockGroup items={dockMain} />
          <DockRule />
          <DockGroup items={dockRecent} />
          <DockRule />
          <DockGroup items={dockRight} />
        </Dock>
      </Desktop>
    </>
  );
}
